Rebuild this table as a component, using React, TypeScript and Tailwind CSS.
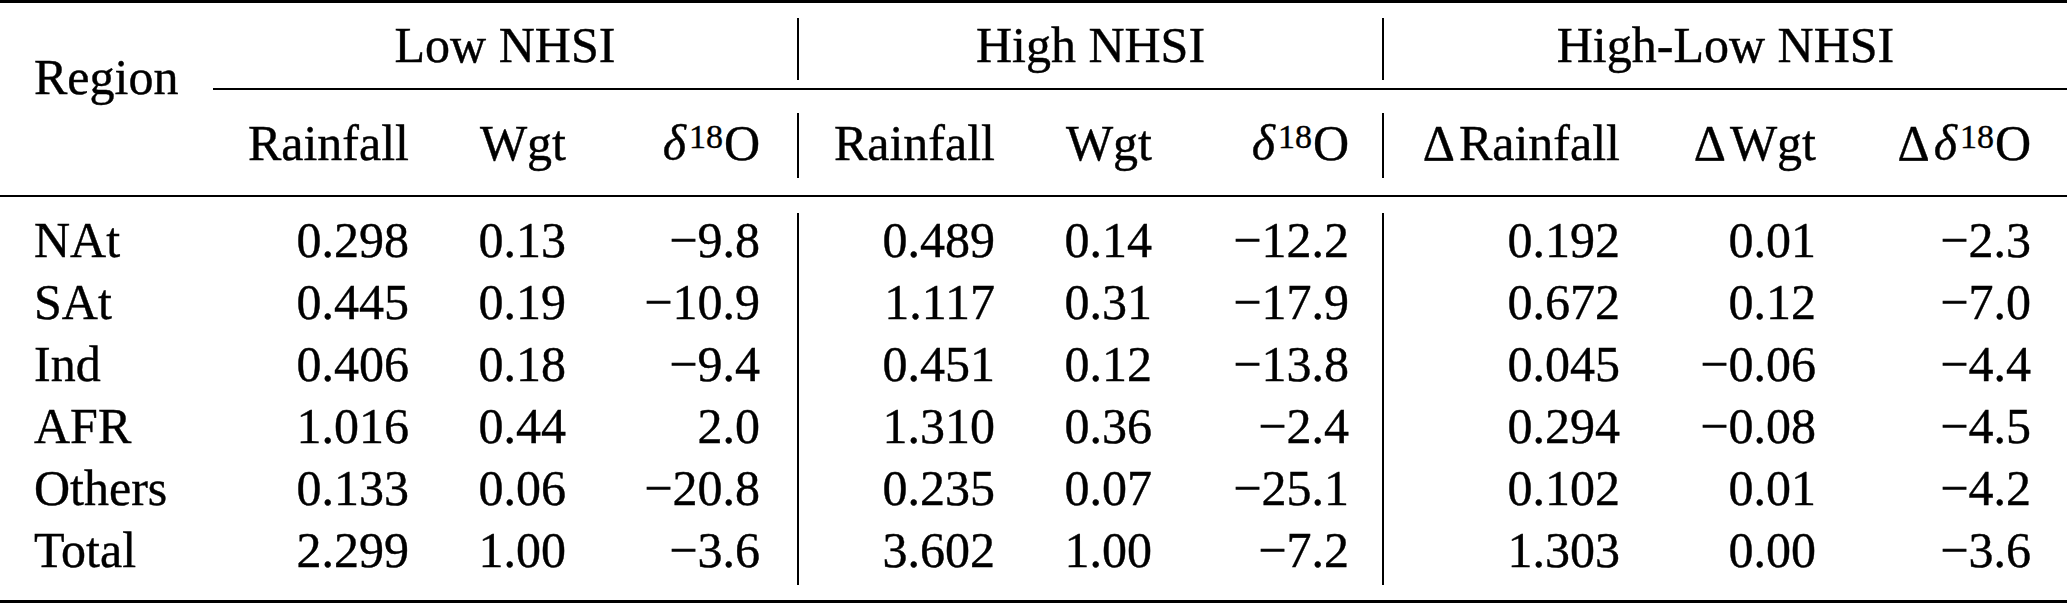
import type { ReactNode } from "react";

type Cell = ReactNode;

// column widths + right padding so the numbers land on the same right edges as the LaTeX table
const COLS = [
  "w-[213px] shrink-0 pl-[34px] text-left",
  "w-[226px] shrink-0 pr-[30px] text-right",
  "w-[157px] shrink-0 pr-[30px] text-right",
  "w-[201px] shrink-0 pr-[37px] text-right",
  "w-[228px] shrink-0 pr-[30px] text-right border-l-2 border-black",
  "w-[157px] shrink-0 pr-[30px] text-right",
  "w-[200px] shrink-0 pr-[33px] text-right",
  "w-[268px] shrink-0 pr-[30px] text-right border-l-2 border-black",
  "w-[196px] shrink-0 pr-[30px] text-right",
  "w-[221px] shrink-0 pr-[36px] text-right",
];

const ROWS: string[][] = [
  ["NAt", "0.298", "0.13", "−9.8", "0.489", "0.14", "−12.2", "0.192", "0.01", "−2.3"],
  ["SAt", "0.445", "0.19", "−10.9", "1.117", "0.31", "−17.9", "0.672", "0.12", "−7.0"],
  ["Ind", "0.406", "0.18", "−9.4", "0.451", "0.12", "−13.8", "0.045", "−0.06", "−4.4"],
  ["AFR", "1.016", "0.44", "2.0", "1.310", "0.36", "−2.4", "0.294", "−0.08", "−4.5"],
  ["Others", "0.133", "0.06", "−20.8", "0.235", "0.07", "−25.1", "0.102", "0.01", "−4.2"],
  ["Total", "2.299", "1.00", "−3.6", "3.602", "1.00", "−7.2", "1.303", "0.00", "−3.6"],
];

function Delta() {
  return <span className="pr-[4px]">Δ</span>;
}

function Delta18O(props: { delta?: boolean }) {
  return (
    <span>
      {props.delta ? <Delta /> : null}
      <span className="italic">δ</span>
      <sup className="top-[-12px] pl-[3px] pr-[1px] text-[34px]">18</sup>O
    </span>
  );
}

const SUBHEADS: Cell[] = [
  "Rainfall",
  "Wgt",
  <Delta18O key="a" />,
  "Rainfall",
  "Wgt",
  <Delta18O key="b" />,
  <span key="d">
    <Delta />
    Rainfall
  </span>,
  <span key="e">
    <Delta />
    Wgt
  </span>,
  <Delta18O key="c" delta />,
];

const GROUPS = [
  { label: "Low NHSI", cls: "w-[584px]" },
  { label: "High NHSI", cls: "w-[585px] border-l-2 border-black" },
  { label: "High-Low NHSI", cls: "w-[685px] border-l-2 border-black" },
];

export default function App() {
  return (
    <div className="h-[604px] w-[2067px] bg-white [font-family:'Liberation_Serif','Times_New_Roman',serif] text-[50px] text-black [-webkit-text-stroke:0.4px_black]">
      <div className="h-[3px] bg-black" />

      <div className="flex">
        <div className={COLS[0]}>
          <div className="pt-[43px] leading-[62px]">Region</div>
        </div>
        <div className="flex flex-1 flex-col">
          <div className="flex pb-[8px] pt-[15px]">
            {GROUPS.map((g) => (
              <div key={g.label} className={`${g.cls} h-[62px] shrink-0 text-center leading-[54px]`}>
                {g.label}
              </div>
            ))}
          </div>
          <div className="h-[2px] bg-black" />
          <div className="flex pb-[17px] pt-[23px]">
            {SUBHEADS.map((h, i) => (
              <div key={i} className={`${COLS[i + 1]} h-[65px] whitespace-nowrap leading-[60px]`}>
                {h}
              </div>
            ))}
          </div>
        </div>
      </div>

      <div className="h-[2px] bg-black" />

      <div className="flex flex-col pb-[15px] pt-[16px]">
        {ROWS.map((row) => (
          <div key={row[0]} className="flex">
            {row.map((v, i) => (
              <div key={i} className={`${COLS[i]} h-[62px] whitespace-nowrap leading-[54px]`}>
                {v}
              </div>
            ))}
          </div>
        ))}
      </div>

      <div className="h-[3px] bg-black" />
    </div>
  );
}
